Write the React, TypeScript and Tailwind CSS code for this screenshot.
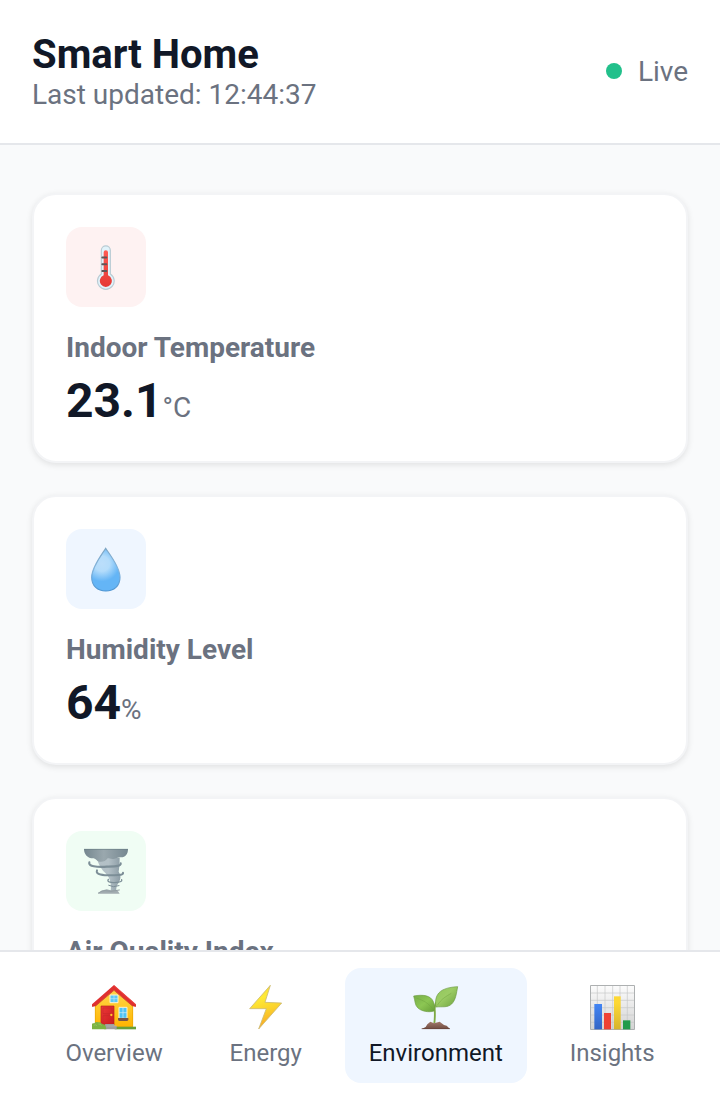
import type { ReactNode } from "react";

function Thermometer() {
  return (
    <svg width="60" height="60" viewBox="0 0 180 180">
      <defs>
        <linearGradient id="mercury" x1="0" y1="0" x2="0" y2="1">
          <stop offset="0" stopColor="#ff5a52" />
          <stop offset="1" stopColor="#e53935" />
        </linearGradient>
      </defs>
      <path d="M76 40a13.500 13.500 0 0 1 27 0v71a25 25 0 1 1-27 0z" fill="#e1f3fb" stroke="#b9cbd3" strokeWidth="3.500" />
      <path d="M83 46q0-6 6.500-6t6.500 6v69a18 18 0 1 1-13 0z" fill="url(#mercury)" />
      <path d="M79 61.500h12M79 81.500h12M79 102h12" stroke="#5f5557" strokeWidth="6" strokeLinecap="round" />
    </svg>
  );
}

function Droplet() {
  return (
    <svg width="60" height="60" viewBox="0 0 180 180">
      <defs>
        <radialGradient id="water" cx="78" cy="74" r="76" gradientUnits="userSpaceOnUse">
          <stop offset="0" stopColor="#bbdefb" />
          <stop offset=".3" stopColor="#b3dcfb" />
          <stop offset=".7" stopColor="#64b5f6" />
          <stop offset="1" stopColor="#64b5f6" />
        </radialGradient>
        <linearGradient id="waterEdge" x1="0" y1="0" x2="0" y2="1">
          <stop offset="0" stopColor="#7fa6c4" />
          <stop offset=".5" stopColor="#83b4dc" />
          <stop offset="1" stopColor="#4c94d2" />
        </linearGradient>
      </defs>
      <path d="M89 28C80 43 47 84 47 115c0 26 18 41 42.500 41s42.500-15 42.500-41c0-32-34-73-43-87z" fill="url(#water)" stroke="url(#waterEdge)" strokeWidth="3.500" />
    </svg>
  );
}

function Tornado() {
  return (
    <svg width="60" height="60" viewBox="0 0 180 180">
      <defs>
        <linearGradient id="funnel" x1="0" y1="0" x2="1" y2="0">
          <stop offset="0" stopColor="#b4c1c7" />
          <stop offset=".5" stopColor="#b3c0c6" />
          <stop offset="1" stopColor="#8d9da6" />
        </linearGradient>
        <linearGradient id="cloud" x1="0" y1="0" x2="1" y2="0">
          <stop offset="0" stopColor="#75878f" />
          <stop offset=".45" stopColor="#9aa8ae" />
          <stop offset="1" stopColor="#768891" />
        </linearGradient>
      </defs>
      <path d="M62 50h69c0 16-1 28-3 42 5 8 7 15 4 24-2 8-8 13-10 19l-2 15h-16c2-14 0-24-3-34-2-10-10-17-20-27-9-12-15-23-19-39z" fill="url(#funnel)" />
      <path d="M24 24h132c0 15-7 25-21 25-10-1-13 3-22 5-8 0-12-4-18-2-6 9-14 11-25 10-8-2-9-8-17-10-17 1-29-11-29-28z" fill="url(#cloud)" />
      <path d="M24 25h132" stroke="#687b84" strokeWidth="2" />
      <path d="M66 158l10-9 16-4 12 3 16-2q8 4 11 12z" fill="#a2acb0" />
      <g fill="none" stroke="#7c8e97" strokeLinecap="round">
        <path d="M40 64c-4 12 22 15 53 13 23-1 43-1 41-10" strokeWidth="6.500" />
        <path d="M63 88c-6 13 20 15 42 15 21-1 38 0 36-8" strokeWidth="6" />
        <path d="M97 115c-6 9 10 11 25 9 12-1 17-3 15-8" strokeWidth="4" />
        <path d="M98 133q13 8 31 1" strokeWidth="3" />
        <path d="M67 156q12-8 20-7l18 2 25-4" stroke="#929da2" strokeWidth="3" />
      </g>
    </svg>
  );
}

function House() {
  return (
    <svg width="70" height="62" viewBox="-3 0 210 186">
      <defs>
        <linearGradient id="wall" x1="0" y1="0" x2="0" y2="1">
          <stop offset="0" stopColor="#ffd54f" />
          <stop offset=".5" stopColor="#ffc928" />
          <stop offset="1" stopColor="#ffb300" />
        </linearGradient>
        <linearGradient id="door" x1="0" y1="0" x2="1" y2="1">
          <stop offset="0" stopColor="#ed3a38" />
          <stop offset="1" stopColor="#c8191f" />
        </linearGradient>
      </defs>
      <path d="M102 38l57 52v67H45V90z" fill="url(#wall)" />
      <path d="M46 92v62M158 92v62" stroke="#e9a300" strokeWidth="2" />
      <path d="M102 30l66 58v7l-11-3-55-47-55 47-11 3v-7z" fill="#df3030" />
      <path d="M102 32l65 57" stroke="#f44b44" strokeWidth="2" />
      <path d="M37 94l11-2 54-46 54 46 11 2" fill="none" stroke="#c62828" strokeWidth="2" />
      <path d="M90 60h24v23H90z" fill="#5bc8f5" stroke="#fff3d0" strokeWidth="3" />
      <path d="M102 59v25M89 71h26" stroke="#bfe8f7" strokeWidth="2" />
      <path d="M63 93h39v57H63z" fill="url(#door)" stroke="#b7211f" strokeWidth="2" />
      <path d="M69 99h27v17H69zM69 122h27v24H69z" fill="none" stroke="#c2282a" strokeWidth="1.500" />
      <circle cx="94" cy="120" r="3.500" fill="#ffca28" />
      <path d="M117 97h24v33h-24z" fill="#4fc3f7" stroke="#fff3d0" strokeWidth="3" />
      <path d="M129 97v33M117 113h24" stroke="#d5eff8" strokeWidth="2" />
      <path d="M114 129h31v6l-3 3h-25l-3-3z" fill="#795548" />
      <path d="M104 155h64v8h-64z" fill="#689f38" />
      <path d="M76 147h27v6h7v10H72v-10z" fill="#9e9e9e" />
      <path d="M79 153h31" stroke="#b8b8b8" strokeWidth="2" />
      <path d="M36 163v-15q0-5 7-3 5-6 12-3 8-2 11 5 9 0 11 7l2 9z" fill="#7cb342" />
      <path d="M41 152q4-6 10 0m4-5q8-1 9 5" fill="none" stroke="#9ccc65" strokeWidth="2" />
    </svg>
  );
}

function Bolt() {
  return (
    <svg width="70" height="62" viewBox="-12 0 210 186">
      <defs>
        <linearGradient id="bolt" x1="0" y1="0" x2="0.250" y2="1">
          <stop offset="0" stopColor="#fdd835" />
          <stop offset=".35" stopColor="#feea35" />
          <stop offset=".65" stopColor="#fbd22d" />
          <stop offset="1" stopColor="#f9a825" />
        </linearGradient>
      </defs>
      <path d="M106 31L44 101h50l-23 61 69-78-50-2z" fill="url(#bolt)" stroke="#cdbb72" strokeWidth="2.500" strokeLinejoin="round" />
    </svg>
  );
}

function Seedling() {
  return (
    <svg width="70" height="62" viewBox="3 0 210 186">
      <defs>
        <linearGradient id="leafLeft" x1="0" y1="0" x2="1" y2="1">
          <stop offset="0" stopColor="#76ad48" />
          <stop offset=".5" stopColor="#8cc653" />
          <stop offset="1" stopColor="#689f38" />
        </linearGradient>
        <linearGradient id="leafRight" x1="0" y1="0" x2="1" y2="1">
          <stop offset="0" stopColor="#90c65a" />
          <stop offset=".45" stopColor="#9ccc65" />
          <stop offset="1" stopColor="#6da23d" />
        </linearGradient>
        <linearGradient id="soil" x1="0" y1="0" x2="0" y2="1">
          <stop offset="0" stopColor="#a1786a" />
          <stop offset="1" stopColor="#704c42" />
        </linearGradient>
      </defs>
      <path d="M103 145c2-18 2-31 1-43 0-10 3-21 14-29" fill="none" stroke="#7da943" strokeWidth="5.500" />
      <path d="M41 63c28-5 51-2 59 17 4 9 5 20 2 28-15 5-38 1-48-9-10-9-8-20-13-36z" fill="url(#leafLeft)" stroke="#6c9c43" strokeWidth="2" />
      <path d="M108 96c-4-22 1-41 20-51 14-7 28-9 45-10-4 20-5 39-18 52-13 12-29 7-47 9z" fill="url(#leafRight)" stroke="#6c9c43" strokeWidth="2" />
      <path d="M50 70c18 5 37 15 49 33M112 91c12-20 27-27 42-36" fill="none" stroke="#70a540" strokeWidth="1.500" />
      <path d="M65 162l12-6 5-8 9-8 11 5 17-5 13 10 8 2 10 10z" fill="url(#soil)" />
      <path d="M65 161h85" stroke="#653f36" strokeWidth="2" />
    </svg>
  );
}

function BarChart() {
  return (
    <svg width="70" height="62" viewBox="0 0 210 186">
      <defs>
        <linearGradient id="paper" x1="0" y1="0" x2="0" y2="1">
          <stop offset="0" stopColor="#fcfcfc" />
          <stop offset="1" stopColor="#d3d3d3" />
        </linearGradient>
        <linearGradient id="blueBar" x1="0" y1="0" x2="0" y2="1">
          <stop offset="0" stopColor="#4285f4" />
          <stop offset="1" stopColor="#3465c5" />
        </linearGradient>
        <linearGradient id="yellowBar" x1="0" y1="0" x2="0" y2="1">
          <stop offset=".2" stopColor="#fdd835" />
          <stop offset="1" stopColor="#d6b42c" />
        </linearGradient>
      </defs>
      <path d="M40.500 31.500h132v132h-132z" fill="url(#paper)" stroke="#adb0b1" strokeWidth="3" />
      <path d="M61 33v129M84 33v129M107 33v129M129 33v129M151 33v129M42 54h129M42 76h129M42 98h129M42 120h129M42 142h129" stroke="#c5c7c7" strokeWidth="2" />
      <path d="M52 87h23v76H52z" fill="url(#blueBar)" />
      <path d="M81 114h21v49H81z" fill="#ee4134" />
      <path d="M111 64h20v99h-20z" fill="url(#yellowBar)" />
      <path d="M138 136h22v27h-22z" fill="#239b4b" />
    </svg>
  );
}

type Metric = { label: string; value: string; unit: string; tint: string; icon: ReactNode };

const metrics: Metric[] = [
  { label: "Indoor Temperature", value: "23.1", unit: "°C", tint: "bg-[#fef2f2]", icon: <Thermometer /> },
  { label: "Humidity Level", value: "64", unit: "%", tint: "bg-[#eff6ff]", icon: <Droplet /> },
  { label: "Air Quality Index", value: "42", unit: "AQI", tint: "bg-[#f0fdf4]", icon: <Tornado /> },
];

const tabs = [
  { label: "Overview", icon: <House />, active: false },
  { label: "Energy", icon: <Bolt />, active: false },
  { label: "Environment", icon: <Seedling />, active: true },
  { label: "Insights", icon: <BarChart />, active: false },
];

export default function App() {
  return (
    <div className="flex h-[1098px] w-full flex-col overflow-hidden bg-[#f9fafb] font-['Roboto',sans-serif] text-[#111827]">
      <header className="flex h-[145px] shrink-0 items-start justify-between border-b-2 border-[#e5e7eb] bg-white px-8">
        <div className="pt-[33px]">
          <h1 className="text-[40px] leading-[44px] font-bold">Smart Home</h1>
          <p className="text-[28px] leading-9 text-[#6b7280]">Last updated: 12:44:37</p>
        </div>
        <div className="flex h-[143px] items-center gap-4">
          <span className="mb-0.5 size-4 rounded-full bg-[#22c08b]" />
          <span className="text-[28px] leading-9 text-[#6b7280]">Live</span>
        </div>
      </header>

      <main className="flex min-h-0 flex-1 flex-col gap-8 overflow-hidden px-8 pt-12">
        {metrics.map((metric) => (
          <section
            key={metric.label}
            className="h-[270px] shrink-0 rounded-3xl border-2 border-[#f3f4f6] bg-white p-8 shadow-[0_2px_6px_rgba(0,0,0,0.1)]"
          >
            <div className={`flex size-20 items-center justify-center rounded-2xl ${metric.tint}`}>{metric.icon}</div>
            <h2 className="mt-6 text-[28px] leading-[33px] font-bold text-[#6b7280]">{metric.label}</h2>
            <p className="mt-2 flex items-baseline text-5xl leading-[57px] font-bold">
              {metric.value}
              <span className="text-[28px] leading-9 font-normal text-[#6b7280]">{metric.unit}</span>
            </p>
          </section>
        ))}
      </main>

      <nav className="flex h-[148px] shrink-0 items-start justify-around border-t-2 border-[#e5e7eb] bg-white px-8 pt-4">
        {tabs.map((tab) => (
          <button
            key={tab.label}
            className={`flex h-[115px] flex-col items-center rounded-2xl px-6 pt-[7px] ${
              tab.active ? "bg-[#eff6ff] text-[#111827]" : "text-[#6b7280]"
            }`}
          >
            {tab.icon}
            <span className="mt-0.5 text-2xl leading-7">{tab.label}</span>
          </button>
        ))}
      </nav>
    </div>
  );
}
